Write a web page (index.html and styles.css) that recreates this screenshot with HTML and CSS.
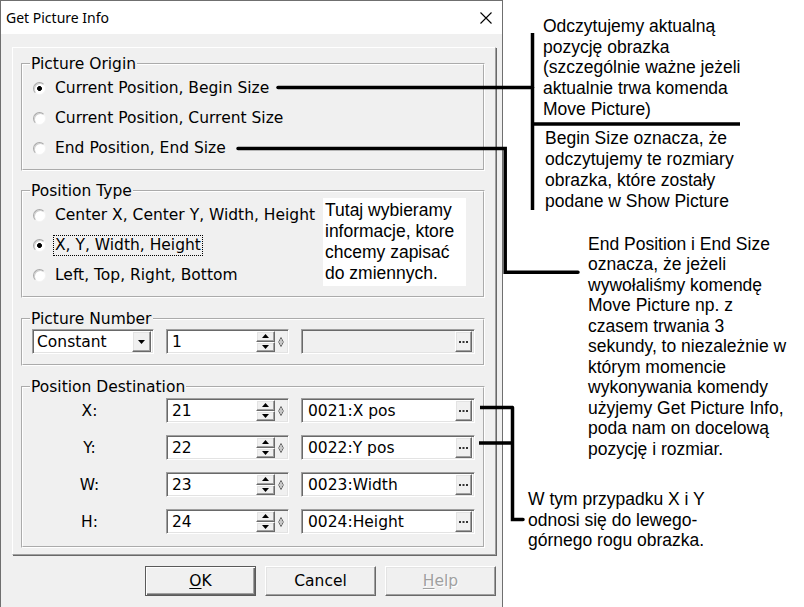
FILE: index.html
```html
<!DOCTYPE html>
<html>
<head>
<meta charset="utf-8">
<title>Get Picture Info</title>
<link rel="stylesheet" href="styles.css">
</head>
<body>
<div class="stage">
  <div class="window">
    <div class="titlebar">
      <span class="title">Get Picture Info</span>
      <svg class="close" width="12" height="12" viewBox="0 0 12 12"><path d="M0.5 0.5L11.5 11.5M11.5 0.5L0.5 11.5" stroke="#000" stroke-width="1.1" fill="none"/></svg>
    </div>
    <div class="client">
      <div class="panel">
        <fieldset class="group g-origin">
          <legend>Picture Origin</legend>
          <div class="radio-row"><span class="radio on"></span><span>Current Position, Begin Size</span></div>
          <div class="radio-row"><span class="radio"></span><span>Current Position, Current Size</span></div>
          <div class="radio-row"><span class="radio"></span><span>End Position, End Size</span></div>
        </fieldset>
        <fieldset class="group g-type">
          <legend>Position Type</legend>
          <div class="radio-row"><span class="radio"></span><span>Center X, Center Y, Width, Height</span></div>
          <div class="radio-row"><span class="radio on"></span><span class="focus">X, Y, Width, Height</span></div>
          <div class="radio-row"><span class="radio"></span><span>Left, Top, Right, Bottom</span></div>
        </fieldset>
        <fieldset class="group g-num">
          <legend>Picture Number</legend>
          <div class="num-row">
            <div class="combo sunk">
              <span class="ctext">Constant</span>
              <span class="dropbtn rbtn"><svg width="7" height="4" viewBox="0 0 7 4"><path d="M0 0H7L3.5 4Z" fill="#000"/></svg></span>
            </div>
            <div class="spin sunk">
              <span class="sval">1</span>
              <span class="updown"><span class="ud rbtn"><svg width="7" height="4" viewBox="0 0 7 4"><path d="M0 4H7L3.5 0Z" fill="#000"/></svg></span><span class="ud rbtn"><svg width="7" height="4" viewBox="0 0 7 4"><path d="M0 0H7L3.5 4Z" fill="#000"/></svg></span></span>
              <span class="varicon"><svg width="6" height="10" viewBox="0 0 6 10"><path d="M3 0.5L5.3 5L3 9.5L0.7 5Z" fill="#fff" stroke="#555" stroke-width="0.9"/><path d="M3 3V7" stroke="#777" stroke-width="0.8"/></svg></span>
            </div>
            <div class="var sunk disabled">
              <span class="vtext"></span>
              <span class="dots rbtn"><svg width="9" height="2" viewBox="0 0 9 2"><rect x="0" y="0" width="2" height="2" fill="#333"/><rect x="3.5" y="0" width="2" height="2" fill="#333"/><rect x="7" y="0" width="2" height="2" fill="#333"/></svg></span>
            </div>
          </div>
        </fieldset>
        <fieldset class="group g-dest">
          <legend>Position Destination</legend>
          <div class="dest-rows">
            <div class="dest-row">
              <span class="dlabel">X:</span>
              <div class="spin sunk">
                <span class="sval">21</span>
                <span class="updown"><span class="ud rbtn"><svg width="7" height="4" viewBox="0 0 7 4"><path d="M0 4H7L3.5 0Z" fill="#000"/></svg></span><span class="ud rbtn"><svg width="7" height="4" viewBox="0 0 7 4"><path d="M0 0H7L3.5 4Z" fill="#000"/></svg></span></span>
                <span class="varicon"><svg width="6" height="10" viewBox="0 0 6 10"><path d="M3 0.5L5.3 5L3 9.5L0.7 5Z" fill="#fff" stroke="#555" stroke-width="0.9"/><path d="M3 3V7" stroke="#777" stroke-width="0.8"/></svg></span>
              </div>
              <div class="var sunk">
                <span class="vtext">0021:X pos</span>
                <span class="dots rbtn"><svg width="9" height="2" viewBox="0 0 9 2"><rect x="0" y="0" width="2" height="2" fill="#333"/><rect x="3.5" y="0" width="2" height="2" fill="#333"/><rect x="7" y="0" width="2" height="2" fill="#333"/></svg></span>
              </div>
            </div>
            <div class="dest-row">
              <span class="dlabel">Y:</span>
              <div class="spin sunk">
                <span class="sval">22</span>
                <span class="updown"><span class="ud rbtn"><svg width="7" height="4" viewBox="0 0 7 4"><path d="M0 4H7L3.5 0Z" fill="#000"/></svg></span><span class="ud rbtn"><svg width="7" height="4" viewBox="0 0 7 4"><path d="M0 0H7L3.5 4Z" fill="#000"/></svg></span></span>
                <span class="varicon"><svg width="6" height="10" viewBox="0 0 6 10"><path d="M3 0.5L5.3 5L3 9.5L0.7 5Z" fill="#fff" stroke="#555" stroke-width="0.9"/><path d="M3 3V7" stroke="#777" stroke-width="0.8"/></svg></span>
              </div>
              <div class="var sunk">
                <span class="vtext">0022:Y pos</span>
                <span class="dots rbtn"><svg width="9" height="2" viewBox="0 0 9 2"><rect x="0" y="0" width="2" height="2" fill="#333"/><rect x="3.5" y="0" width="2" height="2" fill="#333"/><rect x="7" y="0" width="2" height="2" fill="#333"/></svg></span>
              </div>
            </div>
            <div class="dest-row">
              <span class="dlabel">W:</span>
              <div class="spin sunk">
                <span class="sval">23</span>
                <span class="updown"><span class="ud rbtn"><svg width="7" height="4" viewBox="0 0 7 4"><path d="M0 4H7L3.5 0Z" fill="#000"/></svg></span><span class="ud rbtn"><svg width="7" height="4" viewBox="0 0 7 4"><path d="M0 0H7L3.5 4Z" fill="#000"/></svg></span></span>
                <span class="varicon"><svg width="6" height="10" viewBox="0 0 6 10"><path d="M3 0.5L5.3 5L3 9.5L0.7 5Z" fill="#fff" stroke="#555" stroke-width="0.9"/><path d="M3 3V7" stroke="#777" stroke-width="0.8"/></svg></span>
              </div>
              <div class="var sunk">
                <span class="vtext">0023:Width</span>
                <span class="dots rbtn"><svg width="9" height="2" viewBox="0 0 9 2"><rect x="0" y="0" width="2" height="2" fill="#333"/><rect x="3.5" y="0" width="2" height="2" fill="#333"/><rect x="7" y="0" width="2" height="2" fill="#333"/></svg></span>
              </div>
            </div>
            <div class="dest-row">
              <span class="dlabel">H:</span>
              <div class="spin sunk">
                <span class="sval">24</span>
                <span class="updown"><span class="ud rbtn"><svg width="7" height="4" viewBox="0 0 7 4"><path d="M0 4H7L3.5 0Z" fill="#000"/></svg></span><span class="ud rbtn"><svg width="7" height="4" viewBox="0 0 7 4"><path d="M0 0H7L3.5 4Z" fill="#000"/></svg></span></span>
                <span class="varicon"><svg width="6" height="10" viewBox="0 0 6 10"><path d="M3 0.5L5.3 5L3 9.5L0.7 5Z" fill="#fff" stroke="#555" stroke-width="0.9"/><path d="M3 3V7" stroke="#777" stroke-width="0.8"/></svg></span>
              </div>
              <div class="var sunk">
                <span class="vtext">0024:Height</span>
                <span class="dots rbtn"><svg width="9" height="2" viewBox="0 0 9 2"><rect x="0" y="0" width="2" height="2" fill="#333"/><rect x="3.5" y="0" width="2" height="2" fill="#333"/><rect x="7" y="0" width="2" height="2" fill="#333"/></svg></span>
              </div>
            </div>
          </div>
        </fieldset>
      </div>
      <div class="buttons">
        <div class="btn default"><span><u>O</u>K</span></div>
        <div class="btn">Cancel</div>
        <div class="btn disabled"><span><u>H</u>elp</span></div>
      </div>
    </div>
  </div>

  <div class="note note-a">Odczytujemy aktualną<br>pozycję obrazka<br>(szczególnie ważne jeżeli<br>aktualnie trwa komenda<br>Move Picture)</div>
  <div class="note note-b">Begin Size oznacza, że<br>odczytujemy te rozmiary<br>obrazka, które zostały<br>podane w Show Picture</div>
  <div class="note note-c">End Position i End Size<br>oznacza, że jeżeli<br>wywołaliśmy komendę<br>Move Picture np. z<br>czasem trwania 3<br>sekundy, to niezależnie w<br>którym momencie<br>wykonywania komendy<br>użyjemy Get Picture Info,<br>poda nam on docelową<br>pozycję i rozmiar.</div>
  <div class="note note-d">W tym przypadku X i Y<br>odnosi się do lewego-<br>górnego rogu obrazka.</div>
  <div class="note note-e">Tutaj wybieramy<br>informacje, ktore<br>chcemy zapisać<br>do zmiennych.</div>

  <svg class="lines" width="804" height="607" viewBox="0 0 804 607">
    <g stroke="#000" stroke-width="3.5" fill="none" stroke-linejoin="miter">
      <path d="M278 87.5H532.5" stroke-linecap="round"/>
      <path d="M532.5 33V210"/>
      <path d="M532.5 124H740"/>
      <path d="M238 148.5H505.2V272.2H578" stroke-linecap="round"/>
      <path d="M480 407.5H512.5M479 443H512.5"/>
      <path d="M512.5 407.5V519.5H523" stroke-linecap="round"/>
    </g>
  </svg>
</div>
</body>
</html>
```
FILE: styles.css
```css
* { box-sizing: border-box; }
html, body { margin: 0; padding: 0; }
body {
  width: 804px;
  height: 607px;
  overflow: hidden;
  background: #fff;
  font-family: "DejaVu Sans", sans-serif;
  color: #000;
}
.stage {
  position: relative;
  width: 804px;
  height: 607px;
  overflow: hidden;
  background: #fff;
}

/* window */
.window {
  width: 503px;
  height: 607px;
  border: 1px solid #6f6f6f;
  border-bottom: none;
  background: #f0f0f0;
  display: flex;
  flex-direction: column;
}
.titlebar {
  height: 33px;
  flex: none;
  background: #fff;
  display: flex;
  align-items: center;
  justify-content: space-between;
  padding: 0 10px 0 5px;
  font-family: "Noto Sans", sans-serif;
  font-size: 14px;
}
.close { display: block; }
.client {
  padding: 13px 0 0 11px;
  font-size: 15.5px;
}

/* raised outer panel */
.panel {
  width: 484px;
  border: 1px solid;
  border-color: #fff #a0a0a0 #a0a0a0 #fff;
  box-shadow: 1px 1px 0 #696969;
  padding: 7px 0 6px 8px;
}

/* group boxes */
.group {
  margin: 0;
  padding: 0 0 6px 0;
  border: 2px groove #fff;
  width: 464px;
  min-width: 0;
}
.g-type { margin-top: 11px; }
.g-num { margin-top: 12px; padding-bottom: 10px; }
.g-dest { margin-top: 12px; padding-bottom: 12px; }
legend {
  padding: 0 1px;
  margin-left: 7px;
  font-size: 15.5px;
  line-height: 18px;
}

.radio-row {
  display: flex;
  align-items: center;
  height: 30px;
  padding-left: 10px;
  white-space: nowrap;
}
.radio {
  flex: none;
  width: 13px;
  height: 13px;
  border-radius: 50%;
  margin-right: 9px;
  background: #fff;
  border: 1px solid;
  border-color: #a8a8a8 #f4f4f4 #f4f4f4 #a8a8a8;
  box-shadow: inset 1px 1px 0 #d0d0d0;
}
.radio.on {
  background: radial-gradient(circle at 50% 50%, #000 0, #000 2.1px, #fff 2.8px);
}
.focus {
  border: 1px dotted #000;
  padding: 0 1px;
  margin-left: -2px;
  line-height: 19px;
}

/* sunken fields */
.sunk {
  height: 25px;
  border: 1px solid;
  border-color: #a0a0a0 #fff #fff #a0a0a0;
  box-shadow: inset 1px 1px 0 #696969, inset -1px -1px 0 #e3e3e3;
  display: flex;
  align-items: center;
  padding: 2px;
  background: #fff;
  white-space: nowrap;
}
.rbtn {
  background: #f0f0f0;
  border: 1px solid;
  border-color: #fff #696969 #696969 #fff;
  box-shadow: inset -1px -1px 0 #a0a0a0, inset 1px 1px 0 #e3e3e3;
  display: flex;
  align-items: center;
  justify-content: center;
}
.rbtn svg { display: block; }

.num-row {
  display: flex;
  padding: 1px 0 0 9px;
}
.combo {
  width: 122px;
  margin-right: 12px;
}
.ctext { flex: 1; padding-left: 2px; }
.dropbtn { width: 19px; height: 21px; flex: none; }

.spin {
  width: 123px;
  margin-right: 12px;
  padding-right: 1px;
}
.sval {
  flex: 1;
  padding-left: 3px;
  align-self: stretch;
  display: flex;
  align-items: center;
  background: #fff;
}
.updown {
  flex: none;
  width: 19px;
  height: 21px;
  display: flex;
  flex-direction: column;
  background: #f0f0f0;
}
.ud { flex: 1; height: 10.5px; }
.varicon {
  flex: none;
  width: 12px;
  height: 21px;
  background: #f0f0f0;
  display: flex;
  align-items: center;
  justify-content: center;
}
.varicon svg { display: block; }

.var {
  width: 174px;
}
.var.disabled { background: #f0f0f0; }
.vtext { flex: 1; padding-left: 4px; }
.dots { width: 17px; height: 21px; flex: none; }

.dest-rows {
  display: flex;
  flex-direction: column;
  gap: 12px;
  padding: 2px 0 0 9px;
}
.dest-row {
  display: flex;
  align-items: center;
}
.dlabel {
  width: 134px;
  padding-right: 19px;
  text-align: center;
}

/* dialog buttons */
.buttons {
  width: 484px;
  margin-top: 11px;
  display: flex;
  justify-content: flex-end;
  gap: 9px;
}
.btn {
  width: 111px;
  height: 30px;
  display: flex;
  align-items: center;
  justify-content: center;
  background: #f0f0f0;
  border: 1px solid;
  border-color: #fff #696969 #696969 #fff;
  box-shadow: inset -1px -1px 0 #a0a0a0, inset 1px 1px 0 #e3e3e3;
}
.btn.default {
  border-color: #5a5a5a;
  box-shadow: inset 1px 1px 0 #fff, inset -1px -1px 0 #696969, inset -2px -2px 0 #a0a0a0;
}
.btn.disabled {
  color: #a0a0a0;
  text-shadow: 1px 1px 0 #fff;
}
.btn u { text-underline-offset: 2px; }

/* annotations (callouts drawn over the screenshot) */
.note {
  position: absolute;
  font-family: "Liberation Sans", Arial, sans-serif;
  font-size: 17.5px;
  line-height: 20.7px;
  color: #000;
  white-space: nowrap;
}
.note-a { left: 543px; top: 16px; }
.note-b { left: 545px; top: 128px; line-height: 21px; }
.note-c { left: 588px; top: 234px; line-height: 20.45px; }
.note-d { left: 528px; top: 489px; line-height: 20.5px; }
.note-e {
  left: 323px;
  top: 198px;
  width: 143px;
  height: 88px;
  background: #fff;
  padding: 1.5px 0 0 2px;
  line-height: 21px;
}
.lines {
  position: absolute;
  left: 0;
  top: 0;
  pointer-events: none;
}
```
